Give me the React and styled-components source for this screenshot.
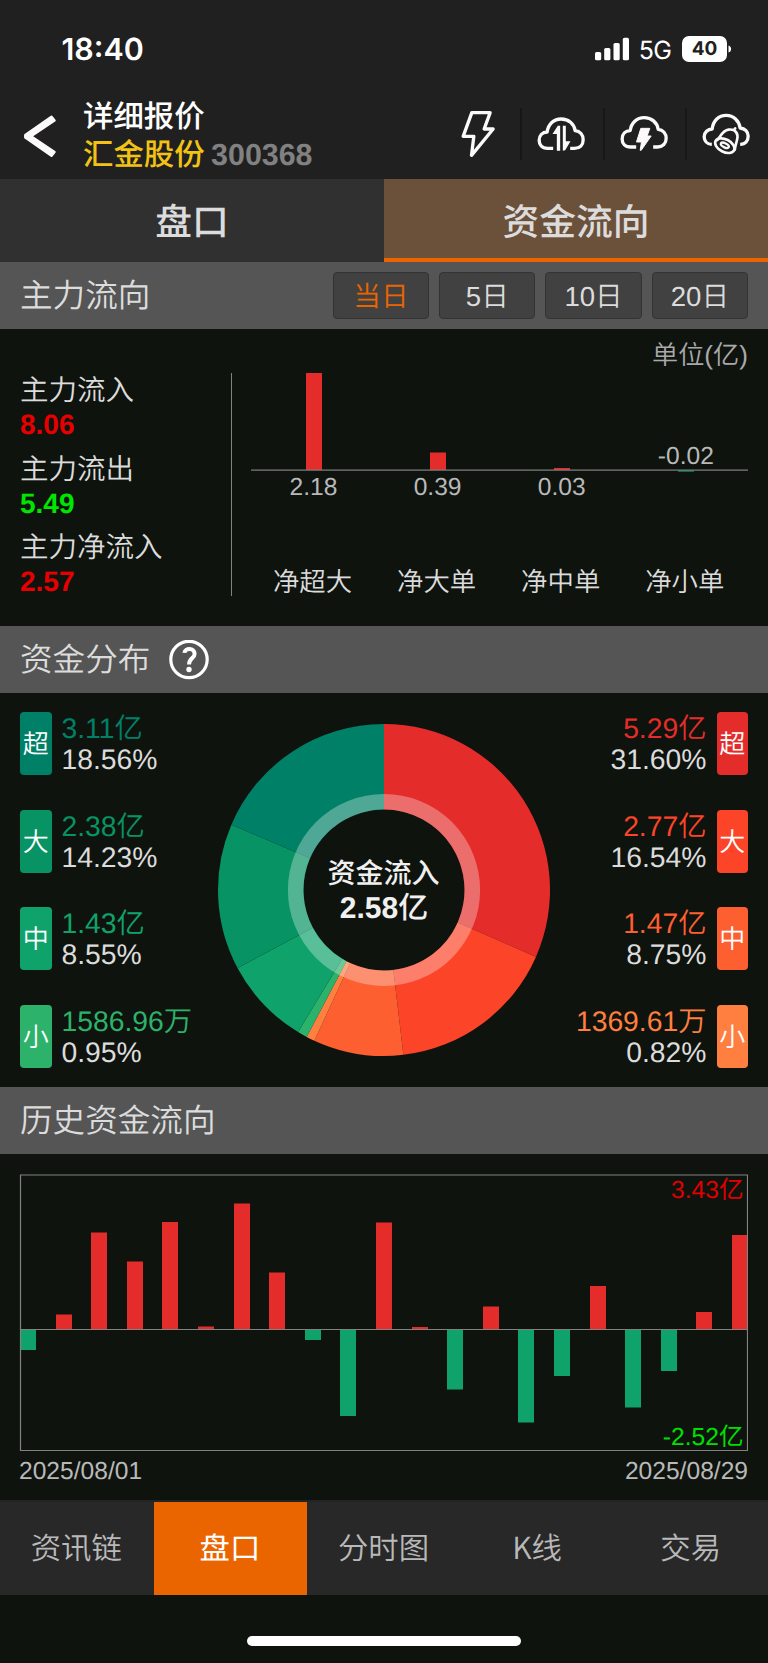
import styled, { createGlobalStyle } from 'styled-components'

const GlobalStyle = createGlobalStyle`
  body {
    margin: 0;
    background: #0f130e;
    font-family: "Liberation Sans", "Noto Sans CJK SC", sans-serif;
    text-rendering: geometricPrecision;
    -webkit-font-smoothing: antialiased;
  }
`

const Page = styled.div`
  width: 768px;
  height: 1663px;
  overflow: hidden;
  background: #0f130e;
  color: #dcdcdc;
  display: flex;
  flex-direction: column;
  white-space: nowrap;
`

const StatusBar = styled.div`
  height: 99px;
  box-sizing: border-box;
  flex: none;
  padding: 30px 36px 0 61.5px;
  background: #202020;
  color: #fff;
  display: flex;
  justify-content: space-between;
  font-family: Inter, sans-serif;
`

const Clock = styled.div`
  font-size: 30.4px;
  font-weight: 600;
  line-height: 40px;
`

const StatusRight = styled.div`
  display: flex;
  align-items: center;
  height: 38px;
`

const Network = styled.span`
  font-size: 25px;
  line-height: 38px;
  margin: 3px 11px 0 9px;
  letter-spacing: -0.8px;
`

const Battery = styled.div`
  width: 45px;
  height: 25.5px;
  border-radius: 7px;
  background: #fff;
  color: #202020;
  font-size: 19px;
  font-weight: 700;
  line-height: 26px;
  text-align: center;
`

const Header = styled.div`
  height: 80px;
  flex: none;
  background: #202020;
  display: flex;
`

const Titles = styled.div`
  flex: 1;
  font-size: 30.4px;
  font-weight: 500;
  line-height: 37.5px;
`

const Title = styled.div`
  color: #fff;
`

const Stock = styled.div`
  color: #f2c314;
  span {
    margin-left: 6.5px;
    font-size: 30.4px;
    font-weight: 700;
    color: #818181;
  }
`

const Actions = styled.div`
  display: flex;
  padding-top: 9px;
`

const Action = styled.div`
  width: 82.67px;
  height: 52px;
  box-shadow: ${p => (p.$first ? 'none' : 'inset 2px 0 #171717')};
  svg {
    display: block;
  }
`

const Tabs = styled.div`
  display: flex;
  height: 83px;
  flex: none;
`

const Tab = styled.div`
  flex: 1;
  box-sizing: border-box;
  padding-top: 2px;
  background: ${p => (p.$active ? '#6b503a' : '#303030')};
  border-bottom: ${p => (p.$active ? '4px solid #ea6500' : 'none')};
  text-align: center;
  font-size: 36.8px;
  font-weight: 500;
  line-height: 83px;
`

const SectionBar = styled.div`
  height: 67px;
  flex: none;
  box-sizing: border-box;
  padding: 0 20px;
  background: #555;
  display: flex;
  align-items: center;
  font-size: 32.6px;
  font-weight: 350;
  line-height: 67px;
  svg {
    margin-left: 19px;
  }
`

const SectionTitle = styled.div`
  height: 67px;
`

const Periods = styled.div`
  margin-left: auto;
  display: flex;
  gap: 10px;
`

const Period = styled.div`
  width: 96.3px;
  height: 47px;
  box-sizing: border-box;
  border: 1px solid #333;
  border-radius: 4px;
  background: #414141;
  color: ${p => (p.$active ? '#ea6500' : '#dcdcdc')};
  text-align: center;
  font-size: 27.6px;
  line-height: 47px;
`

const FlowPanel = styled.div`
  height: 297px;
  flex: none;
  box-sizing: border-box;
  padding: 8px 20px 0;
  font-weight: 350;
`

const Unit = styled.div`
  text-align: right;
  font-size: 26.2px;
  line-height: 36px;
  color: #a9a9a9;
`

const FlowBody = styled.div`
  display: flex;
  height: 223px;
`

const Stats = styled.div`
  width: 212px;
  box-sizing: border-box;
  border-right: 1px solid #828282;
  margin-right: 19px;
  display: flex;
  flex-direction: column;
  gap: 10.5px;
`

const Stat = styled.div`
  font-size: 28.5px;
  line-height: 36px;
`

const StatValue = styled.div`
  font-size: 28px;
  font-weight: 700;
  line-height: 32px;
  color: ${p => (p.$down ? '#00e600' : '#e60000')};
`

const Distribution = styled.div`
  height: 394px;
  flex: none;
  box-sizing: border-box;
  padding: 19px 20px 0;
  display: flex;
  justify-content: space-between;
  font-weight: 350;
`

const Legend = styled.div`
  width: 190px;
  display: flex;
  flex-direction: column;
  gap: 34.5px;
`

const LegendRow = styled.div`
  height: 63px;
  display: flex;
  flex-direction: ${p => (p.$right ? 'row-reverse' : 'row')};
  align-items: center;
  gap: 10px;
  text-align: ${p => (p.$right ? 'right' : 'left')};
`

const Tag = styled.div`
  width: 31.5px;
  height: 63px;
  flex: none;
  border-radius: 4px;
  background: ${p => p.$color};
  color: #fff;
  font-size: 26px;
  line-height: 64px;
  text-align: center;
`

const Amounts = styled.div`
  padding-top: 1px;
`

const Amount = styled.div`
  font-size: 28.3px;
  line-height: 30.7px;
  color: ${p => p.$color};
`

const Donut = styled.svg`
  margin-top: 11px;
  flex: none;
`

const History = styled.div`
  height: 346px;
  flex: none;
  box-sizing: border-box;
  padding: 20px 20px 0 19px;
  svg {
    display: block;
  }
`

const Dates = styled.div`
  display: flex;
  justify-content: space-between;
  font-size: 24.6px;
  line-height: 42px;
  color: #b9b9b9;
`

const BottomNav = styled.div`
  height: 95px;
  flex: none;
  box-sizing: border-box;
  border-top: 2px solid #222423;
  background: #282828;
  display: flex;
`

const NavItem = styled.div`
  flex: 1;
  box-sizing: border-box;
  padding-right: 1px;
  text-align: center;
  font-family: "Noto Sans CJK SC", sans-serif;
  font-size: 30.4px;
  line-height: 89px;
  color: ${p => (p.$active ? '#fff' : '#b9b9b9')};
  background: ${p => (p.$active ? '#ea6500' : 'transparent')};
  font-weight: ${p => (p.$active ? 400 : 350)};
`

const HomeIndicator = styled.div`
  width: 274px;
  height: 10px;
  flex: none;
  margin: 41px auto 0;
  border-radius: 5px;
  background: #fff;
`

const outflow = [
  { tag: '超', amount: '3.11亿', percent: 18.56, color: '#008067' },
  { tag: '大', amount: '2.38亿', percent: 14.23, color: '#079363' },
  { tag: '中', amount: '1.43亿', percent: 8.55, color: '#0fa36b' },
  { tag: '小', amount: '1586.96万', percent: 0.95, color: '#2cb26a' },
]

const inflow = [
  { tag: '超', amount: '5.29亿', percent: 31.6, color: '#e42d2a' },
  { tag: '大', amount: '2.77亿', percent: 16.54, color: '#fc4428' },
  { tag: '中', amount: '1.47亿', percent: 8.75, color: '#fd5f31' },
  { tag: '小', amount: '1369.61万', percent: 0.82, color: '#ff7f40' },
]

const netFlow = [
  { name: '净超大', value: '2.18', height: 97 },
  { name: '净大单', value: '0.39', height: 17.5 },
  { name: '净中单', value: '0.03', height: 2 },
  { name: '净小单', value: '-0.02', height: -2 },
]

// bar heights in px, one per trading day
const history = [
  -20.5, 15, 97, 68, 107.5, 3, 126, 57, -10.5, -86.5, 107,
  2.5, -60, 23, -93, -46.5, 43.5, -78, -41.5, 17.5, 94.5,
]

function Signal() {
  return (
    <svg width="35" height="24" viewBox="0 0 35 24" fill="#fff">
      <rect x="0" y="15" width="6.2" height="8.3" rx="1.6" />
      <rect x="9.2" y="11" width="6.2" height="12.3" rx="1.6" />
      <rect x="18.5" y="6" width="6.2" height="17.3" rx="1.6" />
      <rect x="27.8" y="0.8" width="6.2" height="22.5" rx="1.6" />
    </svg>
  )
}

function IconBox({ children }) {
  return (
    <svg width="82.67" height="52" viewBox="-2.5 0 248 156" fill="none" stroke="#fbf9f9" strokeWidth="10" strokeLinejoin="round">
      {children}
    </svg>
  )
}

const cloud = 'M97 121 H80 C63 121 55 110 55 97 C55 82 65 72 79 72 C82 48 99 33 121 33 C143 33 160 47 163 68 C178 69 187 81 187 95 C187 111 177 121 161 121 H148'

function Wedges() {
  const parts = [...inflow, ...[...outflow].reverse()]
  let start = 0
  return parts.map(part => {
    const from = (start / 100) * Math.PI * 2
    start += part.percent
    const to = (start / 100) * Math.PI * 2
    const at = (r, a) => `${384 + r * Math.sin(a)} ${890 - r * Math.cos(a)}`
    return (
      <path
        key={part.color}
        fill={part.color}
        d={`M${at(80.5, from)} L${at(166, from)} A166 166 0 0 1 ${at(166, to)} L${at(80.5, to)} A80.5 80.5 0 0 0 ${at(80.5, from)}Z`}
      />
    )
  })
}

function LegendList({ items, right }) {
  return (
    <Legend>
      {items.map(item => (
        <LegendRow key={item.tag} $right={right}>
          <Tag $color={item.color}>{item.tag}</Tag>
          <Amounts>
            <Amount $color={item.color}>{item.amount}</Amount>
            <Amount $color="#dcdcdc">{item.percent.toFixed(2)}%</Amount>
          </Amounts>
        </LegendRow>
      ))}
    </Legend>
  )
}

function NetFlowChart() {
  return (
    <svg width="497" height="223" viewBox="0 0 497 223" textAnchor="middle">
      {netFlow.map((item, i) => {
        const x = 62.5 + i * 124.1
        const up = item.height > 0
        return (
          <g key={item.name}>
            <rect
              x={Math.round(x - 8)}
              y={up ? 97 - item.height : 97}
              width="16"
              height={Math.abs(item.height)}
              fill={up ? '#e42d2a' : '#0b6b48'}
            />
            <text x={x} y={up ? 121.5 : 90.5} fontSize="24.6" fill="#b9b9b9">{item.value}</text>
            <text x={x - 1} y="217.6" fontSize="26.4" fill="#dcdcdc">{item.name}</text>
          </g>
        )
      })}
      <rect x="0" y="96.5" width="497" height="1.2" fill="#828282" />
    </svg>
  )
}

function HistoryChart() {
  return (
    <svg width="729" height="277" viewBox="0 0 729 277">
      {history.map((h, i) => (
        <rect
          key={i}
          x={1 + Math.round(i * 35.6)}
          y={h > 0 ? 155.5 - h : 155.5}
          width="16"
          height={Math.abs(h)}
          fill={h > 0 ? '#e42d2a' : '#0fa36b'}
        />
      ))}
      <path d="M1.5 1 H728.5 V276.5 H1.5 Z M1.5 155.5 H728.5" fill="none" stroke="#828282" strokeWidth="1.2" />
      <text x="724.5" y="23.5" fontSize="24.6" fill="#e00000" textAnchor="end">3.43亿</text>
      <text x="724.5" y="271" fontSize="24.6" fill="#00e000" textAnchor="end">-2.52亿</text>
    </svg>
  )
}

export default function App() {
  return (
    <Page>
      <GlobalStyle />
      <StatusBar>
        <Clock>18:40</Clock>
        <StatusRight>
          <Signal />
          <Network>5G</Network>
          <Battery>40</Battery>
          <svg width="5" height="8" viewBox="0 0 5 8">
            <path d="M1.5 0.5 C5 1.5 5 6.5 1.5 7.5Z" fill="#fff" />
          </svg>
        </StatusRight>
      </StatusBar>
      <Header>
        <svg width="83" height="80" viewBox="-0.5 1 83 80" fill="#fbf9f9" stroke="#fbf9f9" strokeWidth="2.5" strokeLinejoin="round">
          <path d="M51 18.8 L54 22.5 L30.5 38.2 L54 54 L51 57.7 L24.8 39.5 V37 Z" />
        </svg>
        <Titles>
          <Title>详细报价</Title>
          <Stock>汇金股份<span>300368</span></Stock>
        </Titles>
        <Actions>
          <Action $first>
            <IconBox>
              <path d="M102 14 H157 L139 63 H166 L101 142 L108 85 H76 Z" />
            </IconBox>
          </Action>
          <Action>
            <IconBox>
              <path d={cloud} />
              <path d="M111 53 L118 53 V128 H108 V78 H95 Z M126 53 H135 V100 H149 L133 127 L126 128 Z" fill="#fbf9f9" stroke="none" />
            </IconBox>
          </Action>
          <Action>
            <IconBox>
              <path d={cloud} transform="translate(0 -4)" />
              <path d="M111 61 H138 L130 84 H142 L112 127 H109 L113 102 H98 Z" fill="#fbf9f9" strokeWidth="3" />
            </IconBox>
          </Action>
          <Action>
            <IconBox>
              <path d="M78 109 C63 109 55 98 55 86 C55 73 66 63 79 63 C82 38 99 22 121 22 C143 22 160 38 163 60 C178 61 187 72 187 84 C187 98 179 109 163 109" />
              <ellipse cx="117" cy="113" rx="31" ry="19" transform="rotate(27 117 113)" strokeWidth="8" />
              <ellipse cx="117" cy="112" rx="13" ry="6" transform="rotate(27 117 112)" strokeWidth="7" />
              <path d="M95 96 C106 83 111 67 128 65 C150 62 158 78 154 94 C152 105 148 112 147 125 M144 66 L148 61" strokeWidth="8" strokeLinecap="round" />
            </IconBox>
          </Action>
        </Actions>
      </Header>
      <Tabs>
        <Tab>盘口</Tab>
        <Tab $active>资金流向</Tab>
      </Tabs>
      <SectionBar>
        <SectionTitle>主力流向</SectionTitle>
        <Periods>
          <Period $active>当日</Period>
          <Period>5日</Period>
          <Period>10日</Period>
          <Period>20日</Period>
        </Periods>
      </SectionBar>
      <FlowPanel>
        <Unit>单位(亿)</Unit>
        <FlowBody>
          <Stats>
            <Stat>主力流入<StatValue>8.06</StatValue></Stat>
            <Stat>主力流出<StatValue $down>5.49</StatValue></Stat>
            <Stat>主力净流入<StatValue>2.57</StatValue></Stat>
          </Stats>
          <NetFlowChart />
        </FlowBody>
      </FlowPanel>
      <SectionBar>
        <SectionTitle>资金分布</SectionTitle>
        <svg width="40" height="40" viewBox="0 0 40 40" fill="none" stroke="#fff" strokeWidth="3.2">
          <circle cx="20" cy="19.5" r="18.2" />
          <path d="M15.4 12.9 C15.8 7.7 25.6 7.5 25.6 13.9 C25.6 18.1 20 18.1 20 24.5" strokeWidth="4" />
          <circle cx="20" cy="29.5" r="2.7" fill="#fff" stroke="none" />
        </svg>
      </SectionBar>
      <Distribution>
        <LegendList items={outflow} />
        <Donut width="334" height="334" viewBox="217 723 334 334" textAnchor="middle">
          <Wedges />
          <circle cx="384" cy="890" r="88.3" fill="none" stroke="#fff" strokeOpacity="0.31" strokeWidth="15.6" />
          <text x="383.5" y="882.6" fontSize="28" fontWeight="500" fill="#f0f0f0">资金流入</text>
          <text x="384" y="917.5" fontSize="30" fontWeight="700" fill="#f0f0f0">2.58<tspan fontWeight="500">亿</tspan></text>
        </Donut>
        <LegendList items={inflow} right />
      </Distribution>
      <SectionBar>
        <SectionTitle>历史资金流向</SectionTitle>
      </SectionBar>
      <History>
        <HistoryChart />
        <Dates>
          <span>2025/08/01</span>
          <span>2025/08/29</span>
        </Dates>
      </History>
      <BottomNav>
        <NavItem>资讯链</NavItem>
        <NavItem $active>盘口</NavItem>
        <NavItem>分时图</NavItem>
        <NavItem>K线</NavItem>
        <NavItem>交易</NavItem>
      </BottomNav>
      <HomeIndicator />
    </Page>
  )
}
